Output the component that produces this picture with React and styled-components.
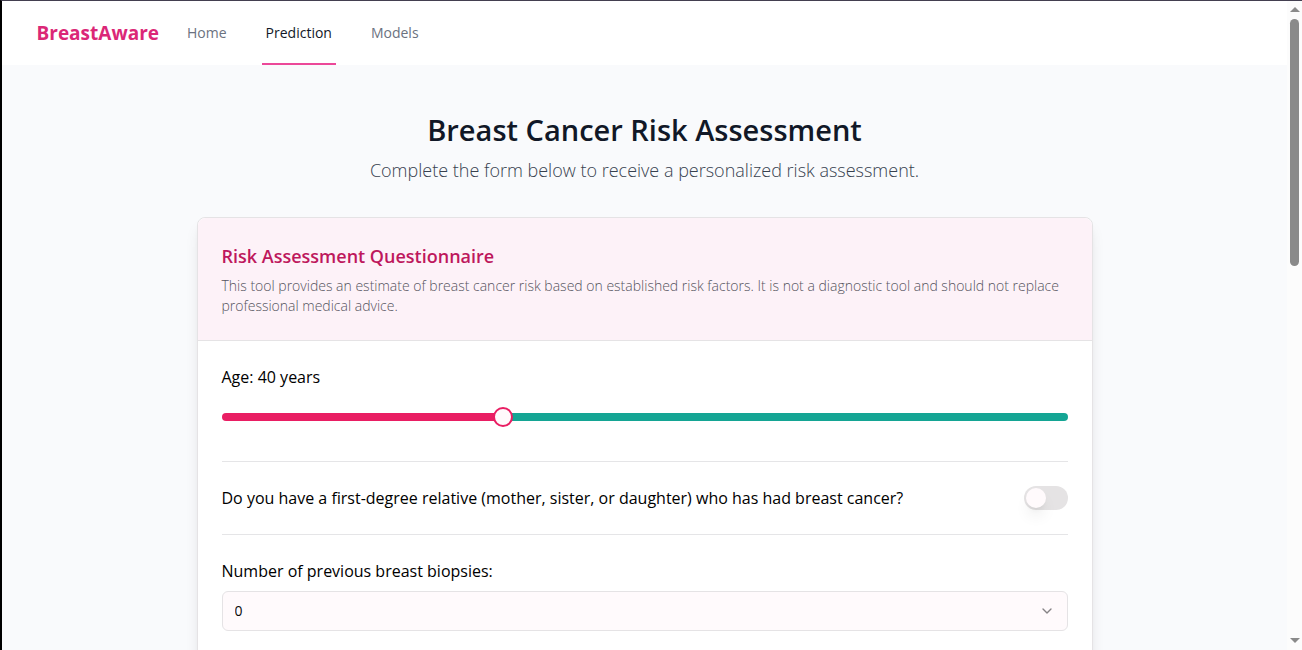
import React, { useState } from "react";
import styled, { createGlobalStyle } from "styled-components";
import { ChevronDown } from "lucide-react";

const GlobalStyle = createGlobalStyle`
  *, *::before, *::after { box-sizing: border-box; }
  body {
    margin: 0;
    font-family: "Open Sans", "Noto Sans", sans-serif;
    font-size: 16px;
    line-height: 24px;
    color: #0a0a0b;
  }
  h1, h2, p { margin: 0; }
`;

const Frame = styled.div`
  display: grid;
  grid-template-columns: minmax(0, 1fr) 15px;
  height: 100vh;
  border-top: 1px solid #433f50;
  border-left: 2px solid #000000;
  overflow: hidden;
`;

const Page = styled.div`
  min-height: 0;
  overflow: hidden;
  background: #f9fafc;
`;

const Header = styled.header`
  background: #ffffff;
`;

const NavBar = styled.nav`
  display: flex;
  align-items: stretch;
  gap: 24px;
  max-width: 1280px;
  height: 64px;
  margin: 0 auto;
  padding: 0 32px;
`;

const Brand = styled.a`
  display: flex;
  align-items: center;
  font-size: 19px;
  font-weight: 700;
  line-height: 28px;
  color: #db2777;
  text-decoration: none;
`;

const NavLinks = styled.div`
  display: flex;
  gap: 31px;
`;

const NavLink = styled.a`
  display: flex;
  align-items: center;
  padding: 2px 4px 0;
  border-bottom: 2px solid ${({ $active }) => ($active ? "#ec4899" : "transparent")};
  font-size: 14px;
  font-weight: 500;
  line-height: 20px;
  color: ${({ $active }) => ($active ? "#111827" : "#6b7280")};
  text-decoration: none;
`;

const Main = styled.main`
  max-width: 960px;
  margin: 0 auto;
  padding: 47px 32px;
`;

const Intro = styled.div`
  display: flex;
  flex-direction: column;
  gap: 8px;
  margin-bottom: 33px;
  text-align: center;
`;

const PageTitle = styled.h1`
  font-size: 29px;
  font-weight: 600;
  line-height: 36px;
  color: #111827;
`;

const Lead = styled.p`
  font-size: 18px;
  font-weight: 300;
  line-height: 28px;
  color: #37414f;
`;

const Card = styled.section`
  border: 1px solid #e5e3e5;
  border-radius: 8px;
  background: #ffffff;
  box-shadow: 0 10px 15px -3px rgba(0, 0, 0, 0.1), 0 4px 6px -4px rgba(0, 0, 0, 0.1);
`;

const CardHeader = styled.div`
  display: flex;
  flex-direction: column;
  gap: 6px;
  padding: 24px;
  border-bottom: 1px solid #e5e3e5;
  border-radius: 8px 8px 0 0;
  background: #fdf2f8;
`;

const CardTitle = styled.h2`
  font-size: 18px;
  font-weight: 600;
  line-height: 28px;
  color: #be185d;
`;

const CardText = styled.p`
  font-size: 14px;
  font-weight: 300;
  line-height: 20px;
  color: #55545e;
`;

const Form = styled.form`
  padding: 0 24px 24px;
`;

const Field = styled.div`
  display: flex;
  flex-direction: ${({ $inline }) => ($inline ? "row" : "column")};
  justify-content: space-between;
  gap: 8px;
  padding: 24px 0;

  & + & {
    border-top: 1px solid #e5e5e7;
  }
`;

const Label = styled.label`
  font-size: 16px;
  font-weight: 500;
  line-height: 24px;
  color: #000000;
`;

const Slider = styled.input.attrs({ type: "range" })`
  appearance: none;
  width: 100%;
  height: 40px;
  margin: 0;
  background: transparent;
  cursor: pointer;

  &::-webkit-slider-runnable-track {
    height: 8px;
    border-radius: 4px;
    background: linear-gradient(
      to right,
      #e91e63 ${({ $fill }) => $fill}%,
      #14a594 ${({ $fill }) => $fill}%
    );
  }

  &::-webkit-slider-thumb {
    appearance: none;
    width: 20px;
    height: 20px;
    margin-top: -6px;
    border: 2px solid #e91e63;
    border-radius: 50%;
    background: #fffafc;
  }
`;

const Switch = styled.input.attrs({ type: "checkbox", role: "switch" })`
  appearance: none;
  flex: none;
  width: 44px;
  height: 24px;
  margin: 0;
  padding: 2px;
  border-radius: 12px;
  background: #e5e3e4;
  cursor: pointer;

  &::before {
    content: "";
    display: block;
    width: 20px;
    height: 20px;
    border-radius: 50%;
    background: #fffafc;
    box-shadow: 0 10px 15px -3px rgba(0, 0, 0, 0.1), 0 4px 6px -4px rgba(0, 0, 0, 0.1);
  }

  &:checked {
    background: #e91e63;
  }

  &:checked::before {
    margin-left: 20px;
  }
`;

const SelectBox = styled.div`
  display: grid;
  align-items: center;

  & > * {
    grid-area: 1 / 1;
  }

  & > svg {
    justify-self: end;
    margin-right: 13px;
    color: #858285;
    pointer-events: none;
  }
`;

const Select = styled.select`
  appearance: none;
  width: 100%;
  height: 40px;
  padding: 0 12px;
  border: 1px solid #e5e3e5;
  border-radius: 6px;
  background: #fffafc;
  font-family: inherit;
  font-size: 14px;
  line-height: 20px;
  color: #0a0a0b;
`;

const ScrollRail = styled.div`
  display: flex;
  flex-direction: column;
  align-items: center;
  justify-content: space-between;
  padding: 6px 0 7px;
  background: #fcfcfc;
`;

const RailTop = styled.div`
  display: flex;
  flex-direction: column;
  align-items: center;
  gap: 7px;
  height: 259px;
`;

const Arrow = styled.span`
  flex: none;
  border: solid transparent;
  border-width: ${({ $down }) => ($down ? "5px 5px 0" : "0 5px 5px")};
  border-top-color: ${({ $down }) => ($down ? "#8a8a8a" : "transparent")};
  border-bottom-color: ${({ $down }) => ($down ? "transparent" : "#8a8a8a")};
`;

const Thumb = styled.span`
  flex: 1;
  width: 9px;
  border-radius: 5px;
  background: #8a8a8a;
`;

const LINKS = ["Home", "Prediction", "Models"];
const MIN_AGE = 18;
const MAX_AGE = 85;

export default function App() {
  const [age, setAge] = useState(40);
  const fill = Math.round(((age - MIN_AGE) / (MAX_AGE - MIN_AGE)) * 100);

  return (
    <Frame>
      <GlobalStyle />
      <Page>
        <Header>
          <NavBar>
            <Brand href="#">BreastAware</Brand>
            <NavLinks>
              {LINKS.map((name) => (
                <NavLink key={name} href={`#${name.toLowerCase()}`} $active={name === "Prediction"}>
                  {name}
                </NavLink>
              ))}
            </NavLinks>
          </NavBar>
        </Header>
        <Main>
          <Intro>
            <PageTitle>Breast Cancer Risk Assessment</PageTitle>
            <Lead>Complete the form below to receive a personalized risk assessment.</Lead>
          </Intro>
          <Card>
            <CardHeader>
              <CardTitle>Risk Assessment Questionnaire</CardTitle>
              <CardText>
                This tool provides an estimate of breast cancer risk based on established risk
                factors. It is not a diagnostic tool and should not replace professional medical
                advice.
              </CardText>
            </CardHeader>
            <Form>
              <Field>
                <Label htmlFor="age">Age: {age} years</Label>
                <Slider
                  id="age"
                  min={MIN_AGE}
                  max={MAX_AGE}
                  value={age}
                  $fill={fill}
                  onChange={(e) => setAge(Number(e.target.value))}
                />
              </Field>
              <Field $inline>
                <Label htmlFor="relative">
                  Do you have a first-degree relative (mother, sister, or daughter) who has had
                  breast cancer?
                </Label>
                <Switch id="relative" />
              </Field>
              <Field>
                <Label htmlFor="biopsies">Number of previous breast biopsies:</Label>
                <SelectBox>
                  <Select id="biopsies" defaultValue="0">
                    <option>0</option>
                    <option>1</option>
                    <option>2</option>
                  </Select>
                  <ChevronDown size={16} aria-hidden="true" />
                </SelectBox>
              </Field>
            </Form>
          </Card>
        </Main>
      </Page>
      <ScrollRail aria-hidden="true">
        <RailTop>
          <Arrow />
          <Thumb />
        </RailTop>
        <Arrow $down />
      </ScrollRail>
    </Frame>
  );
}
